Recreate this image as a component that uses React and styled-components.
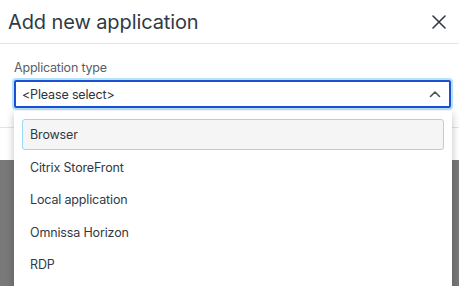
import { createGlobalStyle } from "styled-components";
import styled from "styled-components";

const GlobalStyle = createGlobalStyle`
  html, body {
    margin: 0;
    padding: 0;
    height: 100%;
    overflow: hidden;
  }

  body {
    background-color: #797979;
    font-family: Inter, "Noto Sans", sans-serif;
  }
`;

const Page = styled.div`
  height: 286px;
  position: relative;
`;

const Modal = styled.div`
  background-color: #ffffff;
  display: flex;
  flex-direction: column;
  height: 160px;
`;

const Header = styled.header`
  align-items: center;
  border-bottom: 1px solid #e4e4e4;
  display: flex;
  height: 43px;
  justify-content: space-between;
  padding: 0 12px 0 8px;
`;

const Title = styled.h2`
  color: #2f3a45;
  font-size: 20px;
  font-weight: 400;
  letter-spacing: -0.1px;
  margin: 0;
`;

const CloseButton = styled.button`
  align-items: center;
  background: transparent;
  border: 0;
  cursor: pointer;
  display: flex;
  padding: 0;
`;

const Body = styled.div`
  padding: 16px 8px 0 14px;
  height: 67px;
`;

const Label = styled.label`
  color: #56606a;
  display: block;
  font-size: 12.5px;
  letter-spacing: -0.2px;
  line-height: 16px;
  margin-bottom: 4px;
`;

const Select = styled.div`
  align-items: center;
  border: 2px solid #1b4fd6;
  border-radius: 2px;
  box-shadow: 0 0 0 2px #b5e3fb;
  box-sizing: border-box;
  color: #2c343c;
  display: flex;
  font-size: 12.5px;
  height: 28px;
  justify-content: space-between;
  letter-spacing: -0.15px;
  padding: 0 8px 0 6px;
  width: 437px;
`;

const Footer = styled.div`
  border-top: 1px solid #e4e4e4;
  flex: 1;
`;

const Dropdown = styled.ul`
  background-color: #ffffff;
  box-shadow: 0 3px 8px rgba(0, 0, 0, 0.25);
  height: 180px;
  left: 14px;
  list-style: none;
  margin: 0;
  padding: 8px 8px 0;
  position: absolute;
  top: 111px;
  width: 422px;
`;

const Option = styled.li`
  align-items: center;
  background-color: ${({ $active }) => ($active ? "#f5f5f5" : "transparent")};
  border: 1px solid ${({ $active }) => ($active ? "#98d8f8" : "transparent")};
  border-radius: 3px;
  box-sizing: border-box;
  color: #2f3a45;
  display: flex;
  font-size: 12.5px;
  height: 31px;
  letter-spacing: -0.15px;
  margin-bottom: 1.5px;
  padding-left: 7px;
`;

const options = [
  "Browser",
  "Citrix StoreFront",
  "Local application",
  "Omnissa Horizon",
  "RDP",
];

const App = () => (
  <Page>
    <GlobalStyle />
    <Modal>
      <Header>
        <Title>Add new application</Title>
        <CloseButton aria-label="Close">
          <svg width="16" height="16" viewBox="0 0 16 16">
            <path
              d="M2 2 L14 14 M14 2 L2 14"
              stroke="#2f3a45"
              strokeWidth="1.6"
              strokeLinecap="round"
            />
          </svg>
        </CloseButton>
      </Header>

      <Body>
        <Label>Application type</Label>
        <Select>
          <span>&lt;Please select&gt;</span>
          <svg width="12" height="8" viewBox="0 0 12 8">
            <path
              d="M1.5 6.5 L6 2 L10.5 6.5"
              fill="none"
              stroke="#48525c"
              strokeWidth="1.6"
              strokeLinecap="round"
              strokeLinejoin="round"
            />
          </svg>
        </Select>
      </Body>

      <Footer />
    </Modal>

    <Dropdown>
      {options.map((name, i) => (
        <Option key={name} $active={i === 0}>
          {name}
        </Option>
      ))}
    </Dropdown>
  </Page>
);

export default App;
